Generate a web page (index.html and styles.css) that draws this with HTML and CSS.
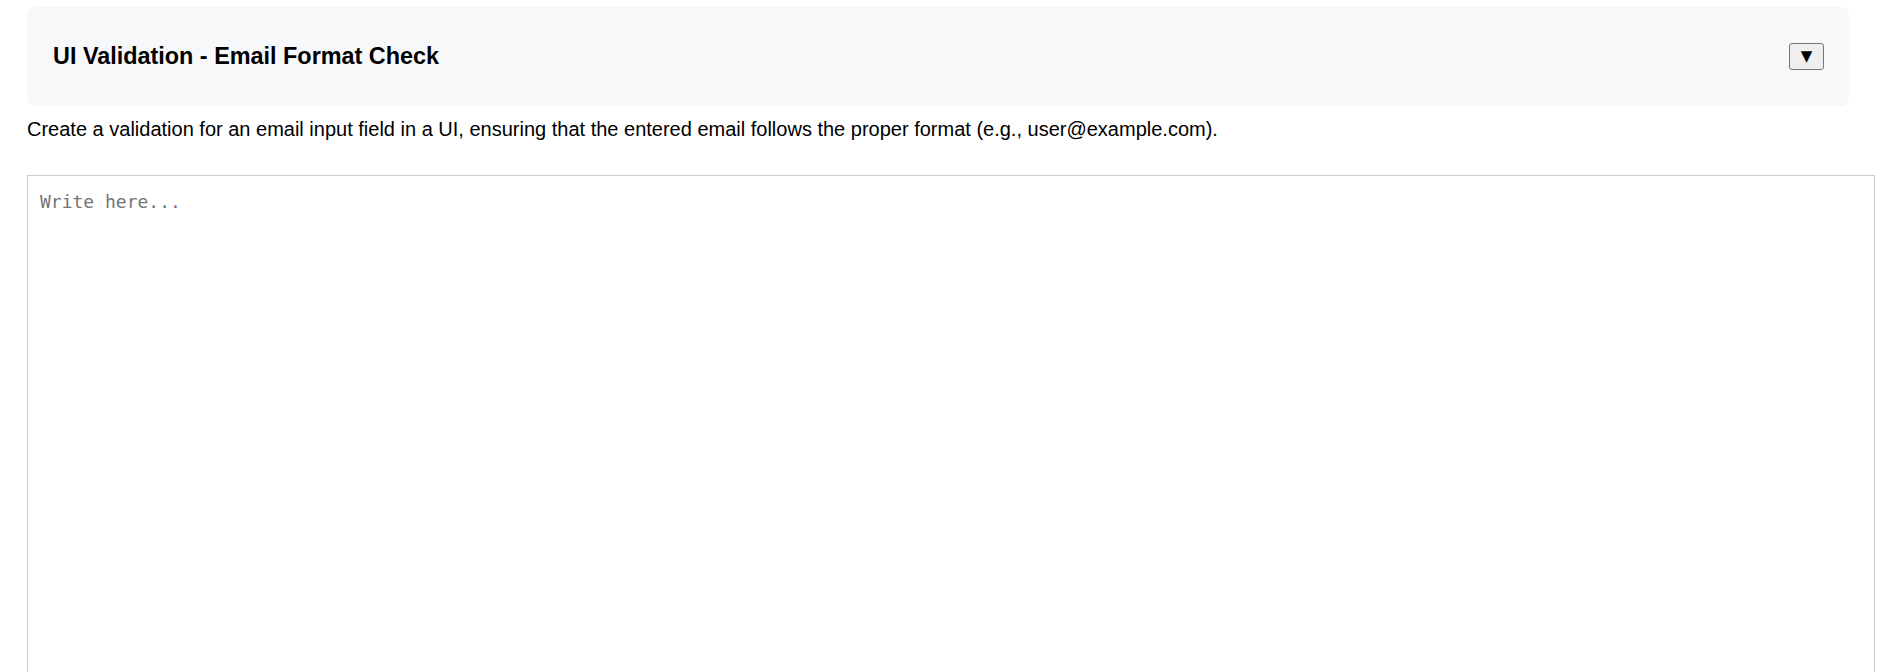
FILE: index.html
```html
<!DOCTYPE html>
<html lang="en">
<head>
<meta charset="utf-8">
<title>UI Validation - Email Format Check</title>
<link rel="stylesheet" href="styles.css">
</head>
<body>
<div class="page">
  <div class="task-header">
    <h3 class="task-title">UI Validation - Email Format Check</h3>
    <button class="toggle" type="button">▼</button>
  </div>
  <p class="task-desc">Create a validation for an email input field in a UI, ensuring that the entered email follows the proper format (e.g., user@example.com).</p>
  <textarea class="answer" placeholder="Write here..."></textarea>
</div>
</body>
</html>
```

FILE: styles.css
```css
html, body {
  margin: 0;
  padding: 0;
  background: #ffffff;
}
body {
  font-family: "Liberation Sans", Arial, sans-serif;
  font-size: 20px;
  color: #000;
}
.page {
  padding: 7px 32px 0 27px;
}
.task-header {
  display: flex;
  align-items: center;
  justify-content: space-between;
  height: 99px;
  padding: 0 25px 0 26px;
  box-sizing: border-box;
  background: #f7f8fa;
  border-radius: 8px;
}
.task-title {
  margin: 0;
  font-size: 23.4px;
  font-weight: bold;
}
.toggle {
  width: 35px;
  height: 27px;
  padding: 0;
  font-size: 15px;
  line-height: 1;
  background: #efefef;
  border: 1px solid #767676;
  border-radius: 3px;
  color: #000;
  font-family: "DejaVu Sans", sans-serif;
}
.task-desc {
  margin: 12px 0 34px;
  font-size: 20px;
  line-height: 23px;
}
.answer {
  display: block;
  width: 100%;
  height: 600px;
  padding: 12px;
  border: 1px solid #ccc;
  font-family: "DejaVu Sans Mono", monospace;
  font-size: 18px;
  line-height: 1.6;
  resize: none;
  outline: none;
}
.answer::placeholder {
  color: #757575;
}
```
